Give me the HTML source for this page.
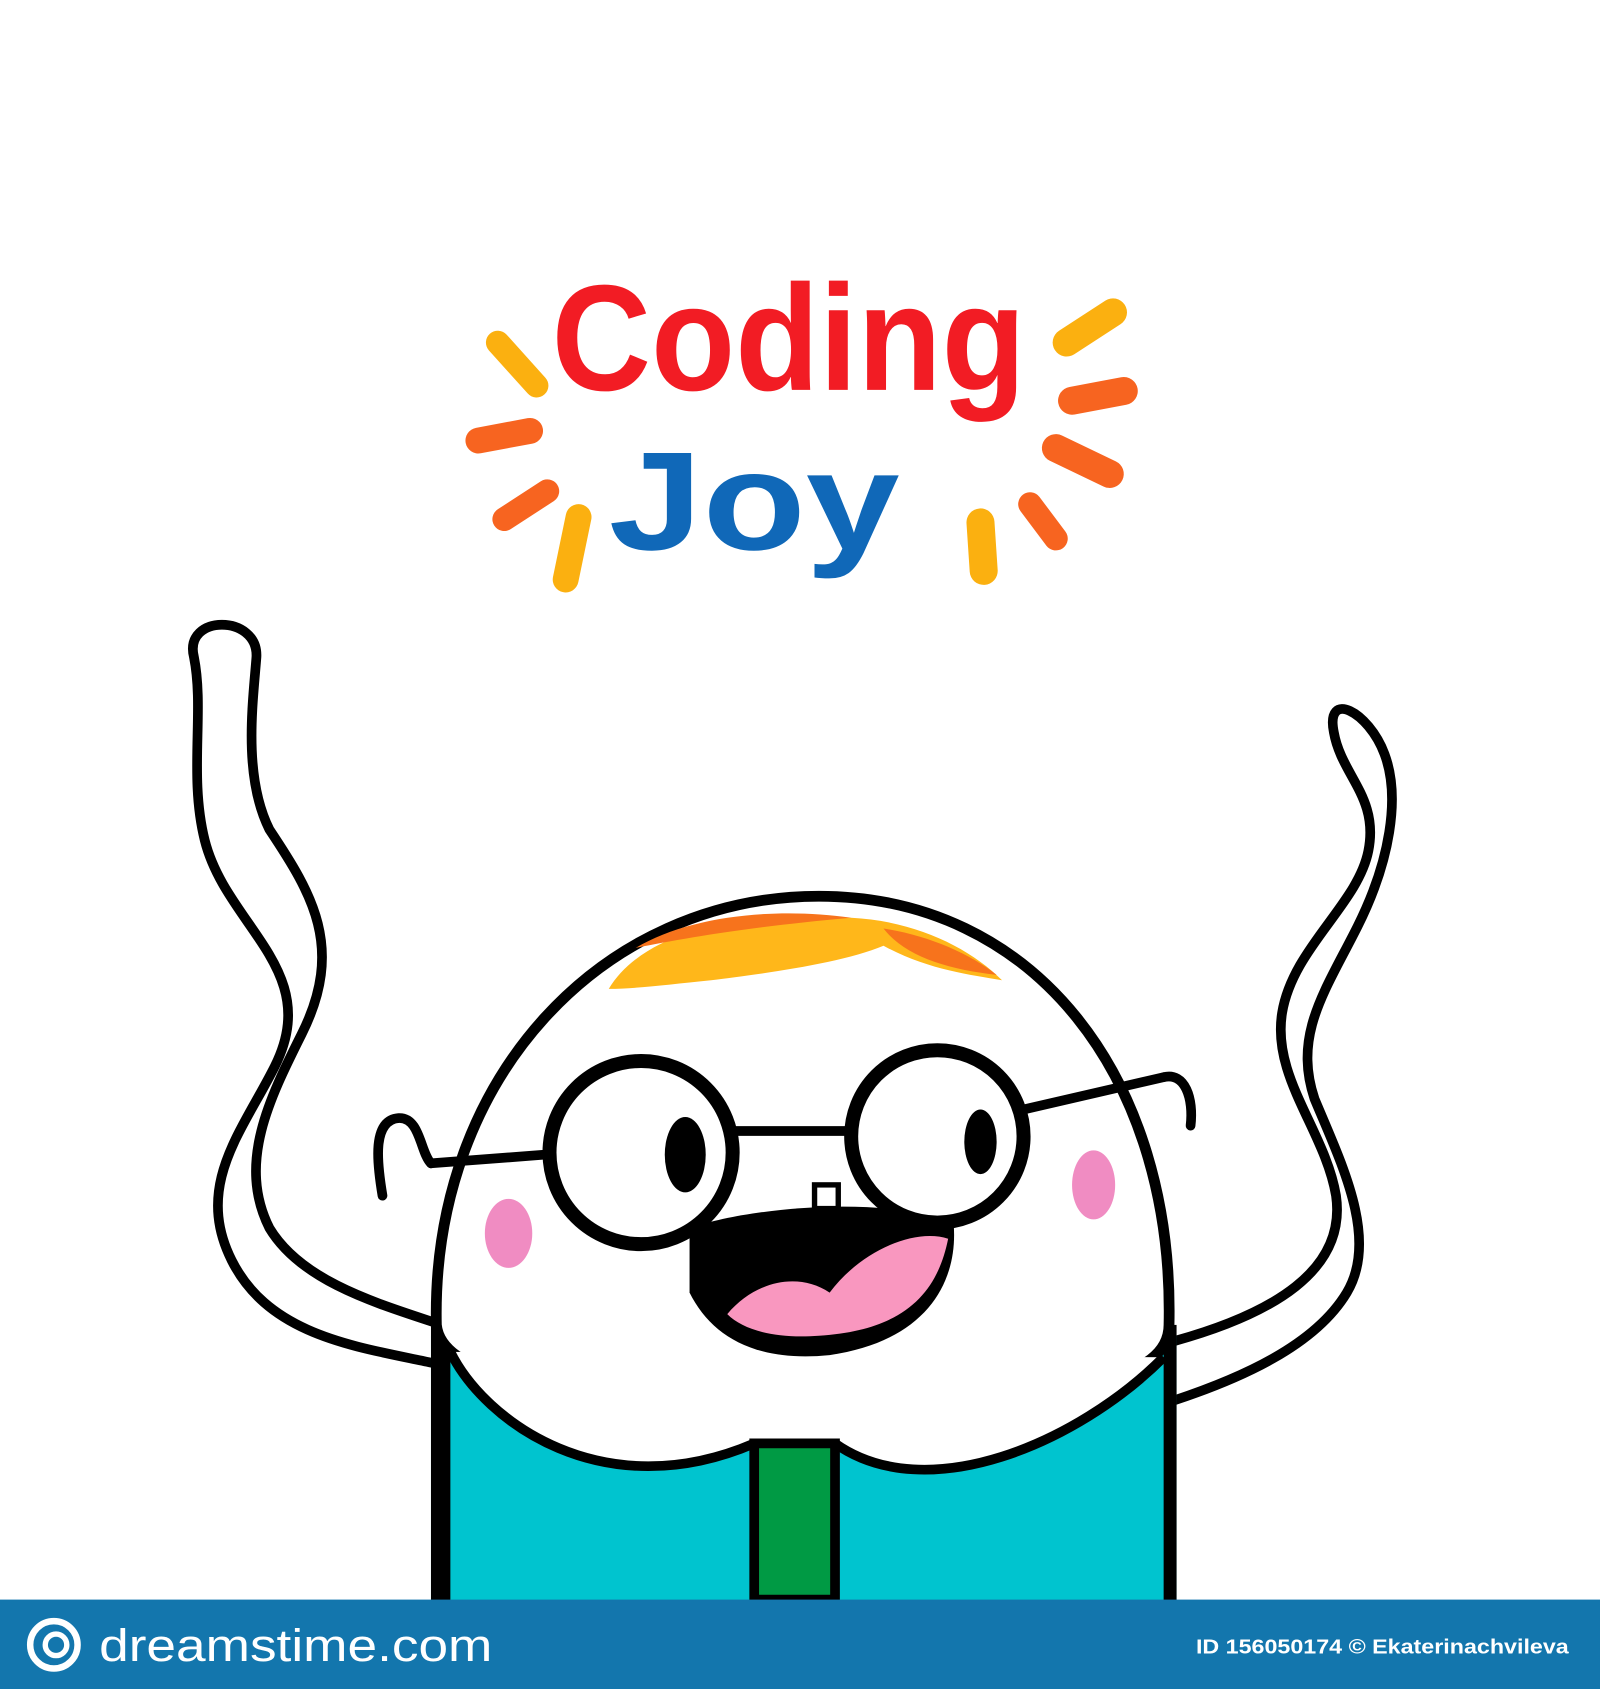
<!DOCTYPE html>
<html><head><meta charset="utf-8"><style>
html,body{margin:0;padding:0;background:#fff;width:1600px;height:1689px;overflow:hidden}
svg{display:block}
</style></head><body>
<svg width="1600" height="1689" viewBox="0 0 1485 1568" preserveAspectRatio="none" xmlns="http://www.w3.org/2000/svg">
<rect width="1485" height="1568" fill="#fff"/>
<!-- rays -->
<g stroke-linecap="round" fill="none">
<line x1="462" y1="318" x2="498" y2="358" stroke="#fbb010" stroke-width="22"/>
<line x1="444" y1="409" x2="492" y2="400" stroke="#f76420" stroke-width="24"/>
<line x1="468" y1="482" x2="508" y2="456" stroke="#f76420" stroke-width="22"/>
<line x1="525" y1="538" x2="537" y2="480" stroke="#fbb010" stroke-width="24"/>
<line x1="990" y1="318" x2="1033" y2="290" stroke="#fbb010" stroke-width="26"/>
<line x1="995" y1="372" x2="1043" y2="363" stroke="#f76420" stroke-width="26"/>
<line x1="980" y1="416" x2="1030" y2="440" stroke="#f76420" stroke-width="26"/>
<line x1="956" y1="468" x2="980" y2="500" stroke="#f76420" stroke-width="22"/>
<line x1="910" y1="485" x2="913" y2="530" stroke="#fbb010" stroke-width="26"/>
</g>
<text x="512" y="362" font-family="Liberation Sans, sans-serif" font-weight="bold" font-size="140" fill="#f21c24" textLength="440" lengthAdjust="spacingAndGlyphs">Coding</text>
<text x="565" y="510" font-family="Liberation Sans, sans-serif" font-weight="bold" font-size="130" fill="#1068b8" textLength="270" lengthAdjust="spacingAndGlyphs">Joy</text>
<!-- arms -->
<g fill="none" stroke="#000" stroke-width="9" stroke-linejoin="round" stroke-linecap="round">
<path d="M400,1265 C330,1250 250,1240 215,1170 C180,1100 225,1050 255,990 C300,900 210,860 190,780 C175,720 190,660 180,610 C170,570 240,570 238,610 C235,650 225,720 250,770 C290,830 320,880 280,960 C250,1020 220,1080 250,1140 C280,1190 350,1210 410,1230"/>
<path d="M1090,1300 C1150,1280 1220,1250 1250,1200 C1280,1150 1245,1080 1220,1020 C1200,960 1230,920 1260,860 C1290,800 1300,740 1285,700 C1270,660 1230,640 1238,680 C1245,720 1280,740 1270,790 C1260,840 1200,880 1190,940 C1180,1000 1230,1050 1240,1110 C1250,1180 1180,1220 1090,1245"/>
</g>
<!-- body -->
<rect x="400" y="1240" width="692" height="250" fill="#00c4cf"/>
<rect x="400" y="1230" width="18" height="260" fill="#000"/>
<rect x="1080" y="1230" width="12" height="260" fill="#000"/>
<!-- head -->
<path d="M405,1230 C400,1000 560,832 760,832 C960,832 1090,1000 1085,1230 C1085,1280 1000,1300 760,1300 C520,1300 410,1280 405,1230 Z" fill="#fff" stroke="#000" stroke-width="10"/>
<!-- collar -->
<path d="M418,1255 C450,1320 560,1400 700,1340 L775,1340 C860,1400 1000,1340 1080,1260" fill="#fff" stroke="#000" stroke-width="9"/>
<path d="M700,1340 L775,1340 L775,1485 L700,1485 Z" fill="#009a44" stroke="#000" stroke-width="9"/>
<!-- hair -->
<path d="M565,918 C600,860 700,845 790,852 C850,855 900,880 930,910 C900,905 860,900 820,878 C780,895 700,905 660,910 C620,914 590,918 565,918 Z" fill="#ffb71a"/>
<path d="M590,880 C640,850 720,842 790,852 C700,860 640,870 590,880 Z M820,862 C860,868 900,885 925,905 C880,900 840,888 820,862Z" fill="#f7731c"/>
<!-- ears -->
<g fill="none" stroke="#000" stroke-width="9" stroke-linecap="round">
<path d="M355,1110 C350,1080 345,1040 370,1038 C390,1037 390,1070 400,1080"/>
<path d="M1080,1000 C1100,995 1108,1020 1105,1045"/>
<path d="M400,1080 L505,1072 M655,1050 L795,1050 M950,1030 L1080,1000"/>
</g>
<!-- cheeks -->
<ellipse cx="472" cy="1145" rx="22" ry="32" fill="#f08cc2"/>
<ellipse cx="1015" cy="1100" rx="20" ry="32" fill="#f08cc2"/>
<!-- mouth -->
<path d="M640,1140 C700,1120 820,1110 885,1135 C890,1190 860,1245 770,1258 C700,1265 660,1240 640,1200 Z" fill="#000"/>
<path d="M675,1220 C700,1190 740,1180 770,1200 C800,1160 850,1140 880,1150 C870,1200 840,1235 760,1240 C720,1243 690,1235 675,1220 Z" fill="#f997bf"/>
<!-- glasses -->
<circle cx="595" cy="1070" r="85" fill="#fff" stroke="#000" stroke-width="13"/>
<circle cx="870" cy="1055" r="80" fill="#fff" stroke="#000" stroke-width="13"/>
<rect x="756" y="1100" width="22" height="22" fill="#fff" stroke="#000" stroke-width="5"/>
<ellipse cx="636" cy="1072" rx="19" ry="35" fill="#000"/>
<ellipse cx="910" cy="1060" rx="15" ry="30" fill="#000"/>
<!-- footer -->
<rect x="0" y="1485" width="1485" height="83" fill="#1376ad"/>
<circle cx="50" cy="1527" r="22" fill="none" stroke="#fff" stroke-width="6"/>
<circle cx="52" cy="1527" r="10" fill="none" stroke="#fff" stroke-width="5"/>
<text x="92" y="1542" font-family="Liberation Sans, sans-serif" font-size="42" fill="#fff" textLength="365" lengthAdjust="spacingAndGlyphs">dreamstime.com</text>
<text x="1110" y="1535" font-family="Liberation Sans, sans-serif" font-weight="bold" font-size="19" fill="#fff" textLength="346" lengthAdjust="spacingAndGlyphs">ID 156050174 © Ekaterinachvileva</text>
</svg>
</body></html>
